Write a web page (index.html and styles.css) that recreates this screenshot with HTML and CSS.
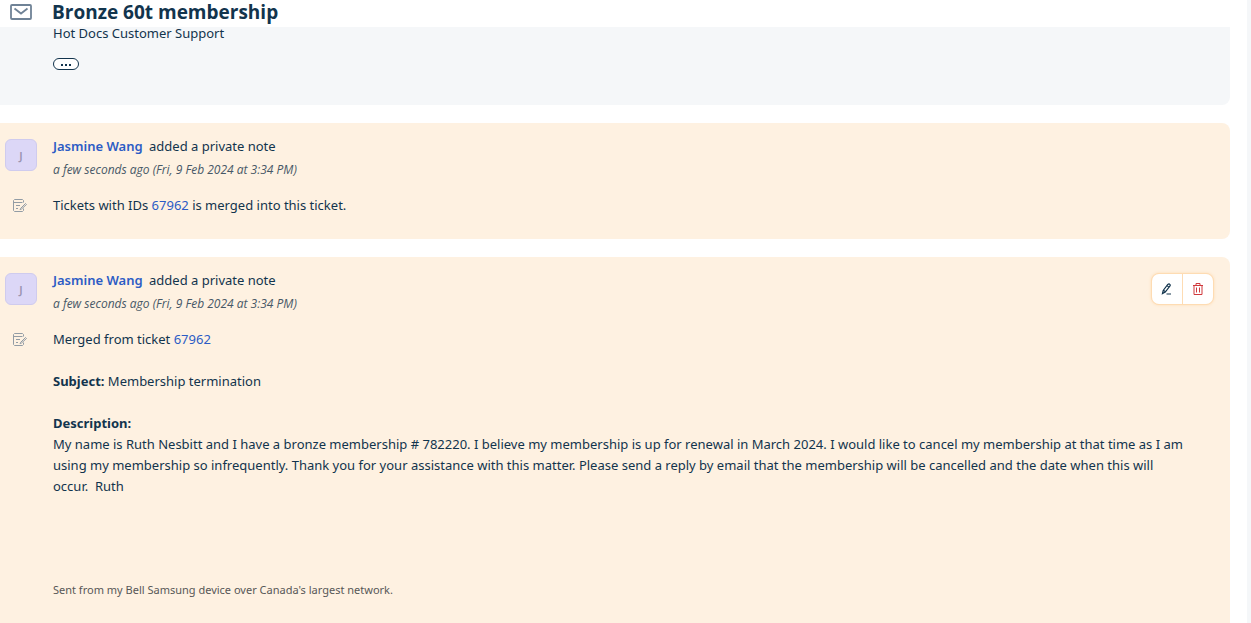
FILE: index.html
```html
<!DOCTYPE html>
<html lang="en">
<head>
<meta charset="UTF-8">
<meta name="viewport" content="width=device-width, initial-scale=1.0">
<title>Bronze 60t membership</title>
<link rel="stylesheet" href="styles.css">
</head>
<body>

<main class="ticket">
    <header class="ticket-header">
        <svg class="mail-icon" width="22" height="16" viewBox="0 0 22 16" fill="none" stroke="#6f8296" stroke-width="1.8">
            <rect x="1" y="1" width="20" height="14" rx="1"/>
            <path d="M4.5 4.5 11 9.5l6.5-5"/>
        </svg>
        <h1>Bronze 60t membership</h1>
    </header>

    <section class="card reply">
        <div class="signature">Hot Docs Customer Support</div>
        <button class="more" type="button" aria-label="Show quoted text">
            <svg width="12" height="4" viewBox="0 0 12 4" fill="#12344d">
                <rect x="1" y="2" width="2" height="2"/>
                <rect x="5" y="2" width="2" height="2"/>
                <rect x="9" y="2" width="2" height="2"/>
            </svg>
        </button>
    </section>

    <article class="card note">
        <div class="side">
            <div class="avatar">J</div>
            <svg class="note-icon" width="14" height="13" viewBox="0 0 14 13" fill="none" stroke="#929ca5">
                <path d="M10.5 3.5v-2l-1-1h-8l-1 1v10l1 1h8l1-1V9.500M.5 3.500h9M3 6.500h4M3 9.500h2"/>
                <path d="M7.500 9.500 12.500 4.500l1 1-5 4.500-1.500.5z"/>
            </svg>
        </div>
        <div class="content">
            <div class="author"><a href="#">Jasmine Wang</a> added a private note</div>
            <div class="time">a few seconds ago (Fri, 9 Feb 2024 at 3:34 PM)</div>
            <div class="text">
                <p>Tickets with IDs <a href="#">67962</a> is merged into this ticket.</p>
            </div>
        </div>
    </article>

    <article class="card note last">
        <div class="side">
            <div class="avatar">J</div>
            <svg class="note-icon" width="14" height="13" viewBox="0 0 14 13" fill="none" stroke="#929ca5">
                <path d="M10.5 3.5v-2l-1-1h-8l-1 1v10l1 1h8l1-1V9.500M.5 3.500h9M3 6.500h4M3 9.500h2"/>
                <path d="M7.500 9.500 12.500 4.500l1 1-5 4.500-1.500.5z"/>
            </svg>
        </div>
        <div class="content">
            <div class="author"><a href="#">Jasmine Wang</a> added a private note</div>
            <div class="time">a few seconds ago (Fri, 9 Feb 2024 at 3:34 PM)</div>
            <div class="text">
                <p>Merged from ticket <a href="#">67962</a></p>
                <p><b>Subject:</b> Membership termination</p>
                <p><b>Description:</b><br>
                My name is Ruth Nesbitt and I have a bronze membership # 782220. I believe my membership is up for renewal in March 2024. I would like to cancel my membership at that time as I am using my membership so infrequently. Thank you for your assistance with this matter. Please send a reply by email that the membership will be cancelled and the date when this will occur.&nbsp;&nbsp;Ruth</p>
                <p class="device">Sent from my Bell Samsung device over Canada's largest network.</p>
            </div>
        </div>
        <div class="actions">
            <button type="button" aria-label="Edit note">
                <svg width="12" height="12" viewBox="0 0 12 12" fill="none" stroke="#12344d" stroke-width="1.2">
                    <path d="M1.500 10.500 2.200 7.500 6.800 1.500Q8 .5 8.800 1.300T8.800 3.200L4.300 9Z M2.500 7.300 4.400 8.800M6 2.600 7.900 4.100M5.500 11H10"/>
                </svg>
            </button>
            <button type="button" aria-label="Delete note">
                <svg width="12" height="12" viewBox="0 0 12 12" fill="none" stroke="#d0393c">
                    <path d="M1 2.500h10M4 2V.500h4V2M2 2.500v9h8v-9M4.500 4.500v5M7.500 4.500v5"/>
                </svg>
            </button>
        </div>
    </article>
</main>
<div class="rail"></div>

</body>
</html>
```
FILE: styles.css
```css
body {
    margin: 0;
    min-height: 100vh;
    display: flex;
    background: #fff;
    color: #12344d;
    font-family: "Noto Sans", sans-serif;
    font-size: 13px;
    line-height: 21px;
}
a {
    color: #2c5cc5;
    text-decoration: none;
}
button {
    padding: 0;
    border: none;
    background: #fff;
    cursor: pointer;
}
.ticket {
    flex: 1;
    display: flex;
    flex-direction: column;
    padding-right: 17px;
}
.rail {
    width: 4px;
    background: #f5f7f9;
}
.ticket-header {
    display: flex;
    align-items: flex-start;
    gap: 20px;
    height: 27px;
    padding-left: 10px;
}
.ticket-header h1 {
    margin: 0;
    font-family: "Open Sans", sans-serif;
    font-size: 19px;
    line-height: 24px;
}
.mail-icon {
    margin-top: 4px;
}
.card {
    margin-bottom: 18px;
    border-radius: 0 8px 8px 0;
}
.reply {
    padding: 0 16px 35px 53px;
    border-top-right-radius: 0;
    background: #f5f7f9;
}
.signature {
    line-height: 12px;
}
.more {
    display: flex;
    align-items: center;
    justify-content: center;
    box-sizing: border-box;
    width: 26px;
    height: 12px;
    margin-top: 19px;
    border: 1px solid #12344d;
    border-radius: 6px;
}
.note {
    display: flex;
    padding: 16px 16px 23px 5px;
    background: #fef1e1;
}
.last {
    position: relative;
    flex: 1;
    margin-bottom: 0;
    border-bottom-right-radius: 0;
}
.side {
    width: 48px;
    flex-shrink: 0;
}
.avatar {
    box-sizing: border-box;
    width: 32px;
    height: 32px;
    border: 1px solid #cfcbee;
    border-radius: 6px;
    background: #dcd7f7;
    color: #9a94b0;
    font-size: 11px;
    font-weight: 600;
    line-height: 32px;
    text-align: center;
}
.note-icon {
    display: block;
    margin: 28px 0 0 8px;
}
.content {
    flex: 1;
}
.author {
    line-height: 14px;
}
.author a {
    margin-right: 3px;
    font-weight: 600;
}
.time {
    margin-top: 8px;
    color: #475867;
    font-family: "Open Sans", sans-serif;
    font-size: 12px;
    line-height: 18px;
    font-style: italic;
}
.text {
    margin-top: 16px;
}
.text p {
    margin: 0 0 21px;
}
.text p:last-child {
    margin-bottom: 0;
}
.text .device {
    margin-top: 82px;
    color: #575757;
    font-size: 11px;
}
.actions {
    position: absolute;
    top: 16px;
    right: 16px;
    display: flex;
    gap: 1px;
    border: 1px solid #fedcb3;
    border-radius: 8px;
    background: #fedcb3;
    box-shadow: 0 0 3px #fedcb3;
    overflow: hidden;
}
.actions button {
    display: flex;
    align-items: center;
    justify-content: center;
    width: 30px;
    height: 30px;
}
```
